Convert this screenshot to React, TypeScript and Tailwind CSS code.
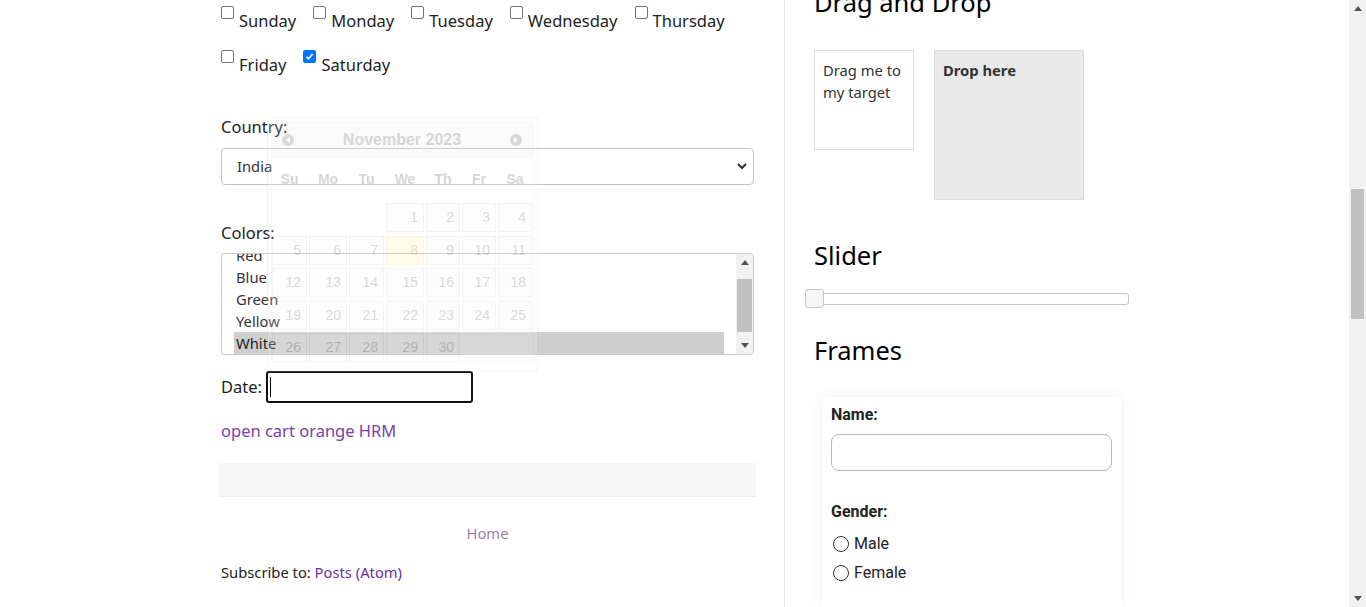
import React from 'react';

const days1 = [
  { label: 'Sunday', checked: false },
  { label: 'Monday', checked: false },
  { label: 'Tuesday', checked: false },
  { label: 'Wednesday', checked: false },
  { label: 'Thursday', checked: false },
];

const days2 = [
  { label: 'Friday', checked: false },
  { label: 'Saturday', checked: true },
];

const colors = ['Red', 'Blue', 'Green', 'Yellow', 'White'];

const DayCheck: React.FC<{ label: string; checked: boolean }> = ({ label, checked }) => {
  return (
    <label className="mr-[17px] flex items-start">
      {checked ? (
        <span className="mt-[6px] flex h-[13px] w-[13px] items-center justify-center rounded-[2px] bg-[#0075ff]">
          <svg width="9" height="9" viewBox="0 0 9 9">
            <path d="M1.5 4.8 L3.6 6.8 L7.6 2" fill="none" stroke="#fff" strokeWidth="1.8" />
          </svg>
        </span>
      ) : (
        <span className="mt-[6px] h-[13px] w-[13px] rounded-[2px] border border-[#767676] bg-white" />
      )}
      <span className="ml-[5px] mt-[8px] text-[16.5px] leading-[26px]">{label}</span>
    </label>
  );
};

const Arrow: React.FC<{ up?: boolean; color?: string }> = ({ up, color = '#505050' }) => (
  <svg width="8" height="5" viewBox="0 0 8 5">
    {up ? <path d="M0 5 L4 0 L8 5 Z" fill={color} /> : <path d="M0 0 L4 5 L8 0 Z" fill={color} />}
  </svg>
);

// jQuery UI datepicker, caught half way through its fade-in
const DatePicker: React.FC = () => {
  const cells: (number | null)[] = [null, null, null];
  for (let d = 1; d <= 30; d++) cells.push(d);
  const heads = ['Su', 'Mo', 'Tu', 'We', 'Th', 'Fr', 'Sa'];

  return (
    <div className="absolute left-[48px] top-[117px] z-10 h-[255px] w-[271px] rounded-[3px] border border-[#c5c5c5] bg-white p-[3px] font-['Liberation_Sans',Arial,sans-serif] opacity-20">
      <div className="flex h-[37px] items-center justify-between rounded-[3px] border border-[#dddddd] bg-[#e9e9e9] pl-[10px] pr-[11px]">
        <span className="flex h-[12px] w-[12px] items-center justify-center rounded-full bg-[#444]">
          <svg width="4" height="6" viewBox="0 0 4 6"><path d="M4 0 L0 3 L4 6 Z" fill="#fff" /></svg>
        </span>
        <span className="text-[16px] font-bold text-[#333]">November 2023</span>
        <span className="flex h-[12px] w-[12px] items-center justify-center rounded-full bg-[#444]">
          <svg width="4" height="6" viewBox="0 0 4 6"><path d="M0 0 L4 3 L0 6 Z" fill="#fff" /></svg>
        </span>
      </div>
      <div className="h-[204px] border border-t-0 border-[#dddddd]">
        <div className="grid h-[43px] grid-cols-[35px_38px_35px_38px_34px_34px_34px] items-center gap-x-[2px] text-[14px] font-bold text-[#333]">
          {heads.map((h) => (
            <span key={h} className="text-center">{h}</span>
          ))}
        </div>
        <div className="mt-[2px] grid grid-cols-[35px_38px_35px_38px_34px_34px_34px] gap-x-[2px] gap-y-[3.5px]">
          {cells.map((d, i) =>
            d === null ? (
              <span key={i} className="h-[29px]" />
            ) : (
              <span
                key={i}
                className={
                  d === 8
                    ? 'flex h-[29px] items-center justify-end border border-[#dad55e] bg-[#fffa90] pr-[5px] text-[14px] text-[#777620]'
                    : 'flex h-[29px] items-center justify-end border border-[#c5c5c5] bg-[#f6f6f6] pr-[5px] text-[14px] text-[#454545]'
                }
              >
                {d}
              </span>
            )
          )}
        </div>
      </div>
    </div>
  );
};

const LeftColumn: React.FC = () => {
  return (
    <div className="relative flex w-[537px] flex-col">
      <div className="flex flex-col px-[2px]">
        <div className="flex h-[44px] items-start">
          {days1.map((d) => (
            <DayCheck key={d.label} label={d.label} checked={d.checked} />
          ))}
        </div>
        <div className="flex h-[44px] items-start">
          {days2.map((d) => (
            <DayCheck key={d.label} label={d.label} checked={d.checked} />
          ))}
        </div>

        <div className="mt-[26px] text-[16.5px] leading-[26px]">Country:</div>
        <div className="mt-[8px] flex h-[37px] items-center justify-between rounded-[4px] border border-[#bfc3cc] pl-[15px] pr-[6px]">
          <span className="text-[14.75px] text-[#333]">India</span>
          <svg width="10" height="7" viewBox="0 0 10 7">
            <path d="M1 1 L5 5 L9 1" fill="none" stroke="#333" strokeWidth="2" />
          </svg>
        </div>

        <div className="mt-[35px] text-[16.5px] leading-[26px]">Colors:</div>
        <div className="mt-[7px] flex h-[102px] overflow-hidden rounded-[3px] border border-[#c8c8c8]">
          <div className="flex-1 overflow-hidden pl-[12px] pr-[12px]">
            <div className="mt-[-10px] flex flex-col">
              {colors.map((c) => (
                <div
                  key={c}
                  className={
                    c === 'White'
                      ? 'h-[22px] bg-[#cecece] pl-[2px] text-[14.75px] leading-[22px] text-[#222]'
                      : 'h-[22px] pl-[2px] text-[14.75px] leading-[22px] text-[#333]'
                  }
                >
                  {c}
                </div>
              ))}
            </div>
          </div>
          <div className="flex w-[17px] flex-col bg-[#f1f1f1]">
            <div className="flex h-[17px] items-center justify-center"><Arrow up /></div>
            <div className="mx-[1px] mt-[8px] h-[53px] bg-[#c1c1c1]" />
            <div className="flex-1" />
            <div className="flex h-[17px] items-center justify-center"><Arrow /></div>
          </div>
        </div>

        <div className="mt-[16px] flex items-center">
          <span className="text-[16.5px] leading-[26px]">Date:</span>
          <div className="ml-[4px] flex h-[32px] w-[207px] items-center rounded-[3px] border-2 border-[#111]">
            <span className="ml-[2px] h-[20px] w-px bg-black" />
          </div>
        </div>

        <a className="mt-[15px] text-[16.5px] leading-[26px] text-[#7a3eab]">open cart orange HRM</a>
      </div>

      <div className="mt-[19px] h-[34px] border-b border-[#ececec] bg-[#f7f7f7]" />

      <div className="mt-[24px] text-center text-[14.75px] leading-[24px] text-[#9c7fa6]">Home</div>
      <div className="mt-[15px] px-[2px] text-[14.75px] leading-[24px] text-[#222]">
        Subscribe to: <a className="text-[#6a2f9c]">Posts (Atom)</a>
      </div>

      <DatePicker />
    </div>
  );
};

const RightColumn: React.FC = () => {
  return (
    <div className="flex w-[340px] flex-col pl-[29px]">
      <h2 className="mt-[-13px] text-[25.5px] leading-[30px] text-black">Drag and Drop</h2>
      <div className="mt-[33px] flex items-start gap-[20px]">
        <div className="h-[100px] w-[100px] border border-[#dddddd] px-[8px] pt-[8px] text-[14.75px] leading-[22px] text-[#333]">
          Drag me to my target
        </div>
        <div className="h-[150px] w-[150px] border border-[#dddddd] bg-[#e9e9e9] px-[8px] pt-[8px] text-[14.75px] font-bold leading-[22px] text-[#333]">
          Drop here
        </div>
      </div>

      <h2 className="mt-[40px] text-[25.5px] leading-[30px] text-black">Slider</h2>
      <div className="relative mt-[19px] h-[19px] w-[315px]">
        <div className="mt-[4px] h-[12px] rounded-[3px] border border-[#c5c5c5] bg-white" />
        <div className="absolute left-[-9px] top-0 h-[19px] w-[19px] rounded-[3px] border border-[#c5c5c5] bg-[#f6f6f6]" />
      </div>

      <h2 className="mt-[30px] text-[25.5px] leading-[30px] text-black">Frames</h2>
      <div className="ml-[8px] mt-[32px] flex h-[260px] w-[299px] flex-col bg-white px-[9px] pt-[8px] font-['Roboto',sans-serif] text-[#222] shadow-[0_0_12px_rgba(0,0,0,0.07)]">
        <div className="text-[16px] font-bold leading-[20px]">Name:</div>
        <div className="mt-[9px] h-[37px] rounded-[8px] border border-[#b5b5b5]" />
        <div className="mt-[31px] text-[16px] font-bold leading-[20px]">Gender:</div>
        <div className="mt-[7px] flex h-[29px] items-center">
          <span className="ml-[2px] h-[16px] w-[16px] rounded-full border-[1.5px] border-[#333]" />
          <span className="ml-[5px] text-[16px]">Male</span>
        </div>
        <div className="flex h-[29px] items-center">
          <span className="ml-[2px] h-[16px] w-[16px] rounded-full border-[1.5px] border-[#333]" />
          <span className="ml-[5px] text-[16px]">Female</span>
        </div>
      </div>
    </div>
  );
};

const PageScrollbar: React.FC = () => (
  <div className="flex w-[17px] flex-col bg-[#f1f1f1]">
    <div className="flex h-[17px] items-center justify-center"><Arrow up /></div>
    <div className="h-[172px]" />
    <div className="mx-[2px] h-[130px] bg-[#c1c1c1]" />
    <div className="flex-1" />
    <div className="flex h-[17px] items-center justify-center"><Arrow /></div>
  </div>
);

export default function App() {
  return (
    <div className="flex h-[607px] w-[1366px] overflow-hidden bg-white font-['Noto_Sans',sans-serif] text-[#222]">
      <div className="flex flex-1 pl-[219px]">
        <LeftColumn />
        <div className="ml-[28px] w-px bg-[#e2e2e2]" />
        <RightColumn />
      </div>
      <PageScrollbar />
    </div>
  );
}
